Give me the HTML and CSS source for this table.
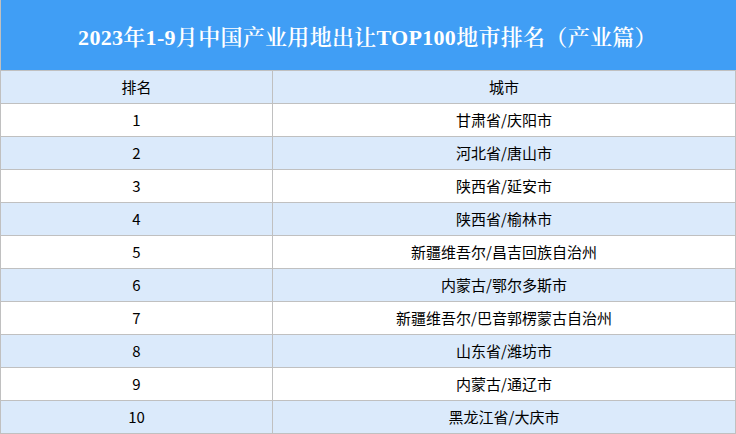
FILE: index.html
```html
<!DOCTYPE html>
<html lang="zh-CN">
<head>
<meta charset="utf-8">
<title>2023年1-9月中国产业用地出让TOP100地市排名（产业篇）</title>
<link rel="stylesheet" href="styles.css">
</head>
<body>
<div class="sheet">
  <div class="title">2023年1-9月中国产业用地出让TOP100地市排名（产业篇）</div>
  <table class="rank">
    <thead>
      <tr><th class="c-rank">排名</th><th class="c-city">城市</th></tr>
    </thead>
    <tbody>
      <tr><td>1</td><td>甘肃省/庆阳市</td></tr>
      <tr><td>2</td><td>河北省/唐山市</td></tr>
      <tr><td>3</td><td>陕西省/延安市</td></tr>
      <tr><td>4</td><td>陕西省/榆林市</td></tr>
      <tr><td>5</td><td>新疆维吾尔/昌吉回族自治州</td></tr>
      <tr><td>6</td><td>内蒙古/鄂尔多斯市</td></tr>
      <tr><td>7</td><td>新疆维吾尔/巴音郭楞蒙古自治州</td></tr>
      <tr><td>8</td><td>山东省/潍坊市</td></tr>
      <tr><td>9</td><td>内蒙古/通辽市</td></tr>
      <tr><td>10</td><td>黑龙江省/大庆市</td></tr>
    </tbody>
  </table>
</div>
</body>
</html>
```
FILE: styles.css
```css
html, body {
  margin: 0;
  padding: 0;
  background: #ffffff;
}

.sheet {
  width: 736px;
  overflow: hidden;
}

.title {
  height: 70px;
  box-sizing: border-box;
  border-left: 1px solid #c0c0c0;
  background: #409ef5;
  color: #ffffff;
  display: flex;
  align-items: center;
  justify-content: center;
  font-family: "Liberation Serif", "Noto Serif CJK SC", "Noto Sans CJK SC", serif;
  font-size: 22px;
  font-weight: 600;
  letter-spacing: 0.3px;
  padding-right: 2px;
}

.rank {
  width: 736px;
  border-collapse: collapse;
  table-layout: fixed;
  font-family: "Noto Sans CJK SC", sans-serif;
  font-size: 15px;
  color: #000000;
}

.rank th,
.rank td {
  border: 1px solid #c0c0c0;
  height: 32px;
  padding: 0;
  text-align: center;
  vertical-align: middle;
  font-weight: 400;
  line-height: 32px;
}

.rank .c-rank {
  width: 271px;
}

.rank thead tr,
.rank tbody tr:nth-child(even) {
  background: #dbeafb;
}

.rank tbody tr:nth-child(odd) {
  background: #ffffff;
}
```
